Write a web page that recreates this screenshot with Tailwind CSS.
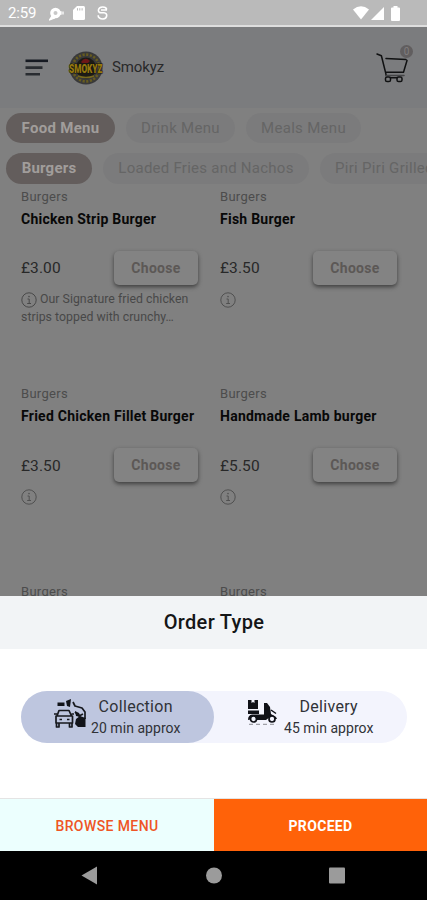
<!DOCTYPE html>
<html lang="en">
<head>
<meta charset="utf-8">
<title>Smokyz</title>
<script src="https://cdn.jsdelivr.net/npm/@tailwindcss/browser@4"></script>
</head>
<body class="bg-black">
<svg class="hidden">
  <symbol id="info" viewBox="0 0 16 16"><circle cx="8" cy="8" r="7.2" fill="none" stroke="currentColor" stroke-width="1"/><path d="M6.5 7H8.2V11.4M6.2 11.5H10" fill="none" stroke="currentColor" stroke-width="1"/><circle cx="8" cy="4.6" r=".8" fill="currentColor"/></symbol>
</svg>
<div class="w-[427px] h-[900px] overflow-hidden flex flex-col font-[Roboto,sans-serif] bg-[#808080]">
  <div class="h-[27px] shrink-0 bg-[#bababa] border-b-2 border-[#dedede] flex items-center pl-2 pr-[27px] text-white">
    <span class="text-[15px] leading-none w-[41px] pt-[2px] tracking-[-0.2px]">2:59</span>
    <svg class="w-4 h-[14px] mt-[2px]" viewBox="0 0 16 14"><circle cx="6.5" cy="6" r="5.3" fill="#fff"/><circle cx="6.5" cy="6" r="2" fill="#c8c8c8"/><path d="M3 9L.5 13L6 11M10 5h2v2h-2M14 4.5v3" stroke="#fff" stroke-width="1.3" fill="#fff"/></svg>
    <svg class="w-3 h-[14px] ml-2 mt-[1px]" viewBox="0 0 12 14"><path d="M4 0H10.5Q12 0 12 1.5V12.5Q12 14 10.5 14H1.5Q0 14 0 12.5V4Z" fill="#fff"/><path d="M4.5 2.2V4.5M6.8 2.2V4.5M9.1 2.2V4.5" stroke="#bababa"/></svg>
    <svg class="w-[11px] h-[14px] ml-3 mt-[1px]" viewBox="0 0 11 14"><path d="M9.7 3.5C9 0 2 .2 1.4 4C1.3 6 2.5 6.8 4 6.8H7C11 7 10.5 12.8 6 13C2.8 13 1 11.5 1.2 9.2M4 4H10" fill="none" stroke="#fff" stroke-width="1.6"/></svg>
    <div class="ml-auto flex items-center gap-[2px] mt-[1px]">
      <svg class="w-[16px] h-[14px]" viewBox="0 0 16 14"><path d="M0 3.5Q8-3.2 16 3.5L8 13.6Z" fill="#fff"/></svg>
      <svg class="w-[13px] h-[13px]" viewBox="0 0 13 13"><path d="M13 0V13H0Z" fill="#fff"/></svg>
      <svg class="w-[9px] h-[15px] ml-[5px]" viewBox="0 0 9 15"><path d="M2.5 0h4v1.5H8q1 0 1 1V14q0 1-1 1H1q-1 0-1-1V2.5q0-1 1-1h1.5Z" fill="#fff"/></svg>
    </div>
  </div>

  <div class="h-[81px] shrink-0 bg-[#7b7c7e] flex items-center pl-[25px] pr-[14px]">
    <svg class="w-[23px] h-[17px]" viewBox="0 0 23 17"><path d="M.5 1.8H23" stroke="#161a22" stroke-width="2.6"/><path d="M.5 8.6H17.5M.5 15.2H15" stroke="#292c31" stroke-width="2.6"/></svg>
    <svg class="w-[36px] h-[34px] ml-5" viewBox="0 0 36 34">
      <circle cx="18" cy="17" r="16.6" fill="#39393a"/>
      <circle cx="18" cy="17" r="13.4" fill="none" stroke="#665b1f" stroke-width="2.6" stroke-dasharray="2.2 1.5"/>
      <circle cx="18" cy="17" r="10.4" fill="#1c1b16"/>
      <path d="M13 11Q17 5 22 10L20 12H14Z" fill="#6d1717"/>
      <path d="M10 25Q18 28 26 25" stroke="#77691c" fill="none" stroke-width="1.5"/>
      <text transform="translate(17.8 22) scale(.86 1.25)" font-family="Roboto" font-weight="900" font-size="9.6" text-anchor="middle" fill="#95780d" stroke="#171610" stroke-width="1" paint-order="stroke">SMOKYZ</text>
    </svg>
    <span class="ml-2 text-[15px] text-[#29292a] tracking-[-0.1px]">Smokyz</span>
    <div class="relative ml-auto w-[37px] h-[40px]">
      <svg class="absolute inset-0 w-[37px] h-[40px]" viewBox="0 0 37 40" fill="none" stroke="#101112" stroke-width="1.5" stroke-linecap="round" stroke-linejoin="round"><path d="M1 6L5.4 7.8L9.5 24.2H27.5L31 12.5M10 10.5L30 11.6M9.5 24.2L10.2 27.5"/><path d="M10.2 27.5H28" stroke="#444547"/><rect x="9.5" y="29" width="5" height="4.6" rx="1.6"/><rect x="21" y="29" width="5" height="4.6" rx="1.6"/><path d="M14.5 29.8H21"/></svg>
      <span class="absolute left-[24px] top-[-3px] size-[13px] rounded-full bg-[#615e5f] text-[#807d7e] text-[10px] leading-[13px] text-center">0</span>
    </div>
  </div>

  <div class="h-[488px] shrink-0 overflow-hidden pt-[5px] text-[#656565]">
    <div class="flex gap-[11px] pl-[6px] text-[15px] leading-[30px] whitespace-nowrap">
      <span class="w-[109px] shrink-0 rounded-full bg-[#635d5c] text-[#a19d9b] font-bold text-center tracking-[0.3px]">Food Menu</span>
      <span class="w-[109px] shrink-0 rounded-full bg-[#7b7b7c] text-center tracking-[0.3px]">Drink Menu</span>
      <span class="w-[115px] shrink-0 rounded-full bg-[#7b7b7c] text-center tracking-[0.3px]">Meals Menu</span>
    </div>
    <div class="flex gap-[11px] pl-[6px] mt-[10px] text-[15px] leading-[31px] whitespace-nowrap">
      <span class="w-[86px] shrink-0 rounded-full bg-[#635d5c] text-[#a19d9b] font-bold text-center tracking-[0.2px]">Burgers</span>
      <span class="w-[206px] shrink-0 rounded-full bg-[#7b7b7c] text-center tracking-[0.25px]">Loaded Fries and Nachos</span>
      <span class="w-[180px] shrink-0 rounded-full bg-[#7b7b7c] pl-[15px] tracking-[0.3px]">Piri Piri Grilled</span>
    </div>
    <div class="grid grid-cols-[177px_177px] gap-x-[22px] pl-[21px] pt-[4px] auto-rows-[197.3px] text-[12.3px]">
      <div>
        <div class="leading-[18px] text-[13px] text-[#4c4c4c] tracking-[0.3px]">Burgers</div>
        <div class="leading-[18px] mt-[4px] text-[14px] font-bold text-[#080808] whitespace-nowrap tracking-[0.25px]">Chicken Strip Burger</div>
        <div class="flex justify-between items-center mt-[23px] h-[34px]"><span class="pt-[2px] text-[15.5px] text-[#282828] tracking-[0.1px]">£3.00</span><span class="w-[84px] leading-[35px] h-[34px] rounded-[5px] bg-[#838383] text-center text-[14px] font-bold text-[#5c5856] tracking-[0.3px] shadow-[0_2px_4px_#3e3e3e]">Choose</span></div>
        <div class="mt-[6px] leading-[17.5px] text-[#484848] whitespace-nowrap tracking-[0.03px]"><svg class="inline size-4 mr-[3px]"><use href="#info"/></svg>Our Signature fried chicken<br>strips topped with crunchy…</div>
      </div>
      <div>
        <div class="leading-[18px] text-[13px] text-[#4c4c4c] tracking-[0.3px]">Burgers</div>
        <div class="leading-[18px] mt-[4px] text-[14px] font-bold text-[#080808] whitespace-nowrap tracking-[0.25px]">Fish Burger</div>
        <div class="flex justify-between items-center mt-[23px] h-[34px]"><span class="pt-[2px] text-[15.5px] text-[#282828] tracking-[0.1px]">£3.50</span><span class="w-[84px] leading-[35px] h-[34px] rounded-[5px] bg-[#838383] text-center text-[14px] font-bold text-[#5c5856] tracking-[0.3px] shadow-[0_2px_4px_#3e3e3e]">Choose</span></div>
        <svg class="size-4 mt-[7px] text-[#505050]"><use href="#info"/></svg>
      </div>
      <div>
        <div class="leading-[18px] text-[13px] text-[#4c4c4c] tracking-[0.3px]">Burgers</div>
        <div class="leading-[18px] mt-[4px] text-[14px] font-bold text-[#080808] whitespace-nowrap tracking-[0.25px]">Fried Chicken Fillet Burger</div>
        <div class="flex justify-between items-center mt-[23px] h-[34px]"><span class="pt-[2px] text-[15.5px] text-[#282828] tracking-[0.1px]">£3.50</span><span class="w-[84px] leading-[35px] h-[34px] rounded-[5px] bg-[#838383] text-center text-[14px] font-bold text-[#5c5856] tracking-[0.3px] shadow-[0_2px_4px_#3e3e3e]">Choose</span></div>
        <svg class="size-4 mt-[7px] text-[#505050]"><use href="#info"/></svg>
      </div>
      <div>
        <div class="leading-[18px] text-[13px] text-[#4c4c4c] tracking-[0.3px]">Burgers</div>
        <div class="leading-[18px] mt-[4px] text-[14px] font-bold text-[#080808] whitespace-nowrap tracking-[0.25px]">Handmade Lamb burger</div>
        <div class="flex justify-between items-center mt-[23px] h-[34px]"><span class="pt-[2px] text-[15.5px] text-[#282828] tracking-[0.1px]">£5.50</span><span class="w-[84px] leading-[35px] h-[34px] rounded-[5px] bg-[#838383] text-center text-[14px] font-bold text-[#5c5856] tracking-[0.3px] shadow-[0_2px_4px_#3e3e3e]">Choose</span></div>
        <svg class="size-4 mt-[7px] text-[#505050]"><use href="#info"/></svg>
      </div>
      <div class="leading-[18px] text-[13px] text-[#4c4c4c] tracking-[0.3px]">Burgers</div>
      <div class="leading-[18px] text-[13px] text-[#4c4c4c] tracking-[0.3px]">Burgers</div>
    </div>
  </div>

  <div class="h-[53px] shrink-0 bg-[#f2f4f6] text-center text-[20px] leading-[52px] font-medium tracking-[0.3px] pl-[1px] text-[#151617]">Order Type</div>
  <div class="h-[150px] shrink-0 bg-white border-b border-[#e4e4e4] pt-[42px] pl-[21px] pr-5">
    <div class="flex h-[52px] rounded-full bg-[#f3f4fd]">
      <div class="w-[193px] rounded-full bg-[#bec6df] flex items-center pl-[33px]">
        <svg class="w-[33px] h-[31px] -mt-2" viewBox="0 0 33 31">
          <g fill="none" stroke="#17191e" stroke-width="1.7" stroke-linejoin="round"><path d="M3 18L5 12.5H15L17.5 18M2 18H18.5V25H2ZM2.5 25V29H5V25M15.5 25V29H18V25M5.5 21.5H8M13 21.5H15.5M0 16H3M17.5 16H20"/><path d="M19 4L21 8L28 10L31 14V21M21 14L25 18L29 16"/></g>
          <path d="M3.5 4.5H10.5V8H3.5ZM12 3L17 1L16 9L13 8ZM22 21L26 18L31.5 20V29H24L21 26ZM21 13L25 15L27 19L22 18Z" fill="#111319"/>
        </svg>
        <div class="ml-[4px] text-center whitespace-nowrap text-[#303237]"><div class="text-[16px] leading-[20px] mt-[2px] tracking-[0.3px]">Collection</div><div class="text-[14px] leading-[22px] tracking-[0.05px]">20 min approx</div></div>
      </div>
      <div class="flex items-center pl-[33px]">
        <svg class="w-[31px] h-[28px] -mt-2" viewBox="0 0 31 28">
          <path d="M1 1H11V10H1ZM1 11.5H12V15H1ZM17 4L20 4L23 8L24 15L29 18L30 20H26L23 18L19 21H9L6 20L1 21Q1 16 5 15.5H17Z" fill="#101117"/>
          <path d="M4.5 1V4L6 3L7.5 4V1" fill="#f3f4fd"/>
          <path d="M24 11L29 14.5" stroke="#101117" stroke-width="1.5"/>
          <circle cx="6.5" cy="20" r="3" fill="#f3f4fd" stroke="#101117" stroke-width="1.7"/><circle cx="25" cy="20" r="3" fill="#f3f4fd" stroke="#101117" stroke-width="1.7"/>
          <path d="M2 25.3H29" stroke="#8b8c93" stroke-dasharray="4 3"/>
        </svg>
        <div class="ml-[6px] text-center whitespace-nowrap text-[#303237]"><div class="text-[16px] leading-[20px] mt-[2px] tracking-[0.3px]">Delivery</div><div class="text-[14px] leading-[22px] tracking-[0.05px]">45 min approx</div></div>
      </div>
    </div>
  </div>
  <div class="h-[52px] shrink-0 flex text-center text-[14px] leading-[54px]">
    <div class="w-[214px] bg-[#ecfffe] text-[#ef5525] font-medium tracking-[0.4px]">BROWSE MENU</div>
    <div class="flex-1 bg-[#ff6209] text-white font-bold tracking-[0.35px]">PROCEED</div>
  </div>
  <div class="flex-1 bg-black">
    <svg class="w-[427px] h-[49px]" viewBox="0 0 427 49" fill="#9b9b9b"><path d="M81.5 24.5L97 15.5V33.5Z"/><circle cx="214" cy="24.5" r="8"/><rect x="329" y="16.5" width="16" height="16" rx="1"/></svg>
  </div>
</div>
</body>
</html>
